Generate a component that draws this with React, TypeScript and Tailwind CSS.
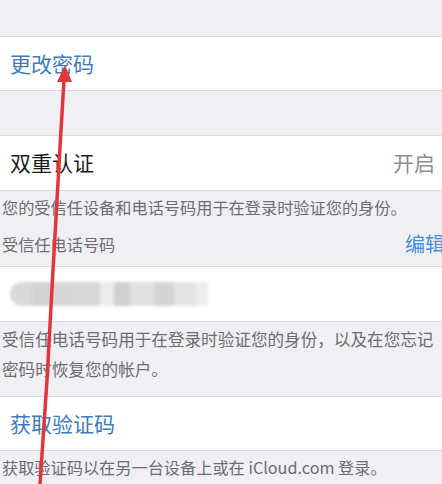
const font = { fontFamily: '"Noto Sans CJK SC", "Noto Sans", sans-serif' };

function Row({ children, className = "" }: { children: React.ReactNode; className?: string }) {
  return (
    <div className={`flex items-center justify-between bg-white border-y border-[#d9d9de] pl-[10px] ${className}`}>
      {children}
    </div>
  );
}

function BlurredNumber() {
  const blocks = [
    "w-[22px] bg-[#d9d9d9]",
    "w-[20px] bg-[#d2d2d2]",
    "w-[18px] bg-[#d6d6d6]",
    "w-[30px] bg-[#d8d8d8]",
    "w-[14px] bg-[#ececec]",
    "w-[16px] bg-[#d0d0d0]",
    "w-[24px] bg-[#e0e0e0]",
    "w-[20px] bg-[#d5d5d5]",
    "w-[22px] bg-[#e4e4e4]",
    "w-[12px] bg-[#ededed]",
  ];
  return (
    <div className="flex h-[24px] items-stretch blur-[1.5px]">
      {blocks.map((b, i) => (
        <div key={i} className={`${b} ${i === 0 ? "rounded-l-full" : ""}`} />
      ))}
    </div>
  );
}

export default function App() {
  return (
    <div className="relative w-[442px] h-[484px] overflow-hidden bg-[#efeff4]" style={font}>
      <div className="h-[36px]" />
      <Row className="h-[55px]">
        <span className="text-[21px] text-[#3f7cb6]">更改密码</span>
      </Row>
      <div className="h-[44px]" />
      <Row className="h-[56px] pr-[7px]">
        <span className="text-[21px] text-[#1c1c1e]">双重认证</span>
        <span className="text-[21px] text-[#8e8e93]">开启</span>
      </Row>
      <div className="pl-[2px] text-[16.2px] text-[#6d6d72] leading-[30px]">
        <div className="h-[31px] flex items-center">您的受信任设备和电话号码用于在登录时验证您的身份。</div>
        <div className="h-[44px] flex items-center justify-between">
          <span>受信任电话号码</span>
          <span className="text-[20px] text-[#4a8fd4] -mr-[3px]">编辑</span>
        </div>
      </div>
      <Row className="h-[56px]">
        <BlurredNumber />
      </Row>
      <div className="pl-[2px] pt-[2px] text-[16.6px] text-[#6d6d72] leading-[30px] h-[74px]">
        受信任电话号码用于在登录时验证您的身份，以及在您忘记
        <br />
        密码时恢复您的帐户。
      </div>
      <Row className="h-[55px]">
        <span className="text-[21px] text-[#3f7cb6]">获取验证码</span>
      </Row>
      <div className="pl-[2px] h-[33px] flex items-center text-[16.2px] text-[#6d6d72]">
        获取验证码以在另一台设备上或在 iCloud.com 登录。
      </div>

      <svg className="absolute inset-0 pointer-events-none" width="442" height="484" viewBox="0 0 442 484">
        <path d="M40 484 L47 380 L53 270 L61 130 L64 80" stroke="#e0353b" strokeWidth="3.5" fill="none" strokeLinecap="round" />
        <polygon points="65,65 57,82 72,82" fill="#e0353b" />
      </svg>
    </div>
  );
}
